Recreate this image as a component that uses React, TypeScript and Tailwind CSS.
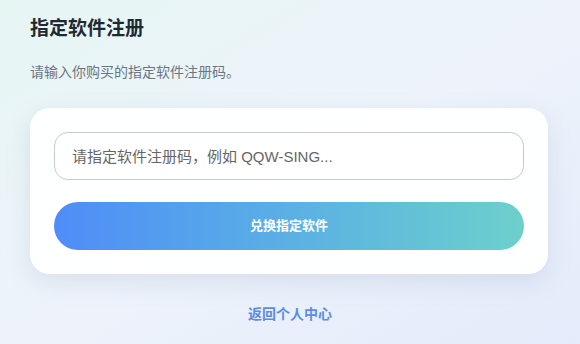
import React from 'react';

const font = { fontFamily: '"Liberation Sans", "Noto Sans CJK SC", sans-serif' };

export default function App() {
  return (
    <div
      className="w-[580px] h-[344px] overflow-hidden bg-gradient-to-br from-[#e6f6f3] via-[#eef3fb] to-[#e4ebfa] px-[30px] pt-[16px]"
      style={font}
    >
      <h1 className="text-[19px] font-bold leading-[26px] text-[#1f2933]">指定软件注册</h1>
      <p className="mt-[20px] text-[14px] leading-[20px] text-[#6b7684]">请输入你购买的指定软件注册码。</p>

      <div className="mt-[26px] w-[518px] rounded-[20px] bg-white/95 p-[24px] shadow-[0_8px_24px_rgba(120,140,170,0.18)]">
        <input
          className="block h-[48px] w-full rounded-[14px] border border-[#c4cad3] bg-white px-[17px] text-[15px] text-[#333] outline-none placeholder:text-[#666]"
          placeholder="请指定软件注册码，例如 QQW-SING..."
          style={font}
        />
        <button
          className="mt-[22px] flex h-[48px] w-full items-center justify-center rounded-full bg-gradient-to-r from-[#4f8cf8] to-[#6dd0cb] text-[13px] font-bold text-white"
          style={font}
        >
          兑换指定软件
        </button>
      </div>

      <div className="mt-[30px] text-center text-[14px] leading-[20px] font-bold text-[#5a8de6]">返回个人中心</div>
    </div>
  );
}
